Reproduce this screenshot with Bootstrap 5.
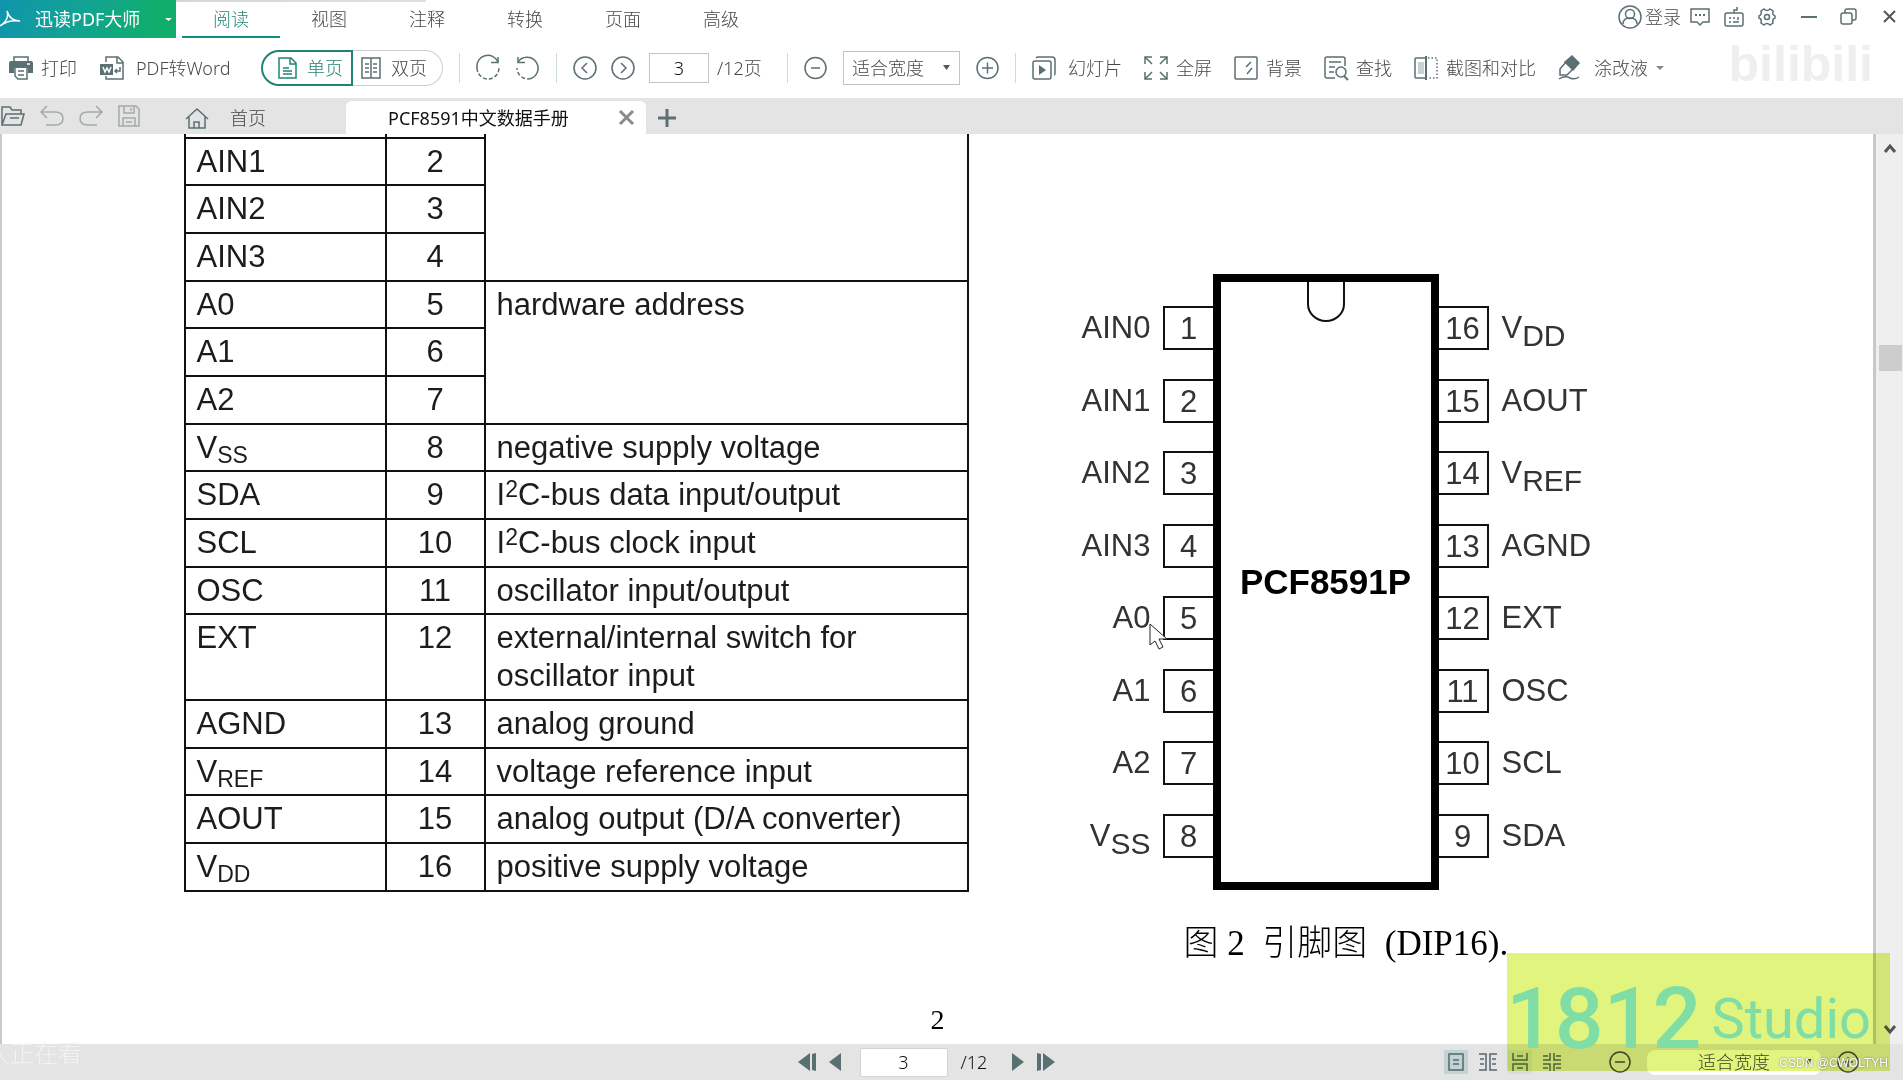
<!DOCTYPE html>
<html lang="zh-CN">
<head>
<meta charset="utf-8">
<meta name="viewport" content="width=device-width, initial-scale=1">
<title>PCF8591中文数据手册 - 迅读PDF大师</title>
<link rel="stylesheet" href="https://cdn.jsdelivr.net/npm/bootstrap@5.3.0/dist/css/bootstrap.min.css">
<script src="https://cdn.jsdelivr.net/npm/bootstrap@5.3.0/dist/js/bootstrap.bundle.min.js"></script>
<style>
  :root { --ink: #484848; --icon: #5b7072; --teal: #1f8474; --strip: #e4e4e4; }
  body { font-family: "Noto Sans", "Noto Sans CJK SC", sans-serif; font-size: 18px; line-height: 24px; font-weight: 300; color: var(--ink); background: #fff; overflow: hidden; }
  svg { display: block; flex: none; fill: none; stroke: currentColor; stroke-width: 1.5; overflow: visible; }
  button { background: none; border: 0; padding: 0; color: inherit; font: inherit; white-space: nowrap; }
  .ic { color: var(--icon); }

  /* title bar */
  .titlebar { height: 38px; }
  .brand { width: 176px; height: 38px; color: #fff; background: linear-gradient(110deg, #1094ac 0%, #12a394 45%, #10ad6c 85%); }
  .brand-name { margin-left: 14px; width: 110px; text-align: left; font-weight: 400; }
  .top-edge { left: 176px; width: 250px; height: 2px; background: linear-gradient(90deg, #d6d6d6, #e0e0e0); }
  .menu { padding-left: 6px; }
  .menu-tab { width: 98px; height: 38px; padding-top: 2px; border-bottom: 2px solid transparent; }
  .menu-tab.active { color: var(--teal); border-bottom-color: #12907f; }
  .window-tools { height: 33px; gap: 14px; padding-right: 7px; }
  .login { gap: 3px; margin-right: -5px; }
  .login span { color: var(--ink); }
  .wm-bili { right: 30px; top: 34px; font: 700 50px/60px "Liberation Sans", sans-serif; color: #f0eef1; }

  /* tool bar */
  .toolbar { height: 60px; padding-left: 9px; }
  .tools { gap: 23px; }
  .navs { gap: 16px; margin: 0 16px; }
  .tool { display: flex; align-items: center; gap: 8px; }
  .tool-wide { gap: 12px; }
  .tool-word { width: 138px; }
  .rule { width: 1px; height: 30px; background: #cfdcdc; }
  .pagemode { height: 36px; }
  .pagemode button { height: 36px; display: flex; align-items: center; gap: 10px; border: 1px solid #cfcfcf; }
  .pagemode .mode-one { width: 92px; padding-left: 15px; border: 2px solid var(--teal); border-radius: 18px 0 0 18px; color: var(--teal); }
  .pagemode .mode-two { width: 90px; padding-left: 8px; border-left: 0; border-radius: 0 18px 18px 0; }
  .page-input { width: 60px; height: 30px; border: 1px solid #c4c4c4; color: #111; text-align: center; font-size: 18px; font-weight: 300; padding: 0; }
  .page-label { width: 122px; color: var(--ink); }
  .paging { gap: 14px; }
  .zoom-select { width: 117px; height: 34px; border: 1px solid #c4c4c4; border-radius: 0; padding: 0 0 0 8px; appearance: none; color: var(--ink); font-size: 18px; font-weight: 300;
    background: #fff url("data:image/svg+xml,%3Csvg xmlns='http://www.w3.org/2000/svg' width='8' height='6'%3E%3Cpath d='M0 0h7L3.500 5z' fill='%23555'/%3E%3C/svg%3E") no-repeat right 8px center; }
  .tools-right { gap: 22px; }

  /* document tabs */
  .doctabs { height: 36px; background: var(--strip); }
  .quick { gap: 15px; width: 186px; padding-left: 1px; color: #a3a9a9; }
  .tab-home { width: 160px; gap: 22px; color: #444; }
  .tab-doc { width: 300px; height: 33px; background: #fff; border-radius: 6px 6px 0 0; padding: 0 12px 0 42px; color: #111; font-weight: 400; }

  /* document */
  .viewer { min-height: 0; }
  .pageview { border-left: 2px solid #c9c9c9; border-right: 3px solid #c8c8c8; overflow: hidden; background: #fff; }
  .sheet { width: 1508px; color: #1c1c1c; font: 400 31px/38px "Liberation Sans", sans-serif; }
  .pins { width: 785px; border-collapse: collapse; }
  .pins td { border: 2px solid #111; padding: 4px 11px 0; vertical-align: top; }
  .pins tr { height: 48px; }
  .pins tr:nth-child(3n+2) { height: 47px; }
  .pins tr.cut { height: 4px; }
  .pins tr.cut td { border-top: 0; padding: 0; }
  .pins tr.tall { height: 86px; }
  .pins td:nth-child(2) { text-align: center; padding-left: 0; padding-right: 0; }
  .pins sub, .pins sup { font-size: 23px; line-height: 0; vertical-align: -5px; position: static; }
  .pins sup { vertical-align: 8px; }
  .c-sym { width: 201px; } .c-pin { width: 99px; }
  .figure-chip { margin: 140px 0 0 91px; color: #333; }
  .legs { height: 552px; margin-top: 32px; }
  .leg { height: 44px; }
  .leg b { width: 50px; height: 44px; border: 2px solid #111; font-weight: 400; line-height: 41px; text-align: center; }
  .legs-l { width: 153px; } .legs-l .leg { justify-content: flex-end; gap: 12px; } .legs-l b { border-right: 0; }
  .legs-r .leg { gap: 13px; } .legs-r b { border-left: 0; }
  .leg sub { font-size: 30px; line-height: 0; vertical-align: -8px; position: static; }
  .chip { width: 226px; height: 616px; border: 8px solid #000; color: #000; font-size: 35px; font-weight: 700; }
  .chip svg { top: 0; left: 50%; margin-left: -19px; }
  .caption-cn { font: 300 35px/44px "Liberation Serif", "Noto Sans CJK SC", serif; color: #000; white-space: pre; margin: 32px 0 0 124px; }
  .cursor { left: 100%; top: 24px; margin-left: -2px; z-index: 2; }
  .folio { font: 400 28px/32px "Liberation Serif", serif; color: #000; }
  .scroller { width: 27px; background: #efefef; color: #555; padding: 10px 0; }
  .thumb { width: 23px; height: 26px; background: #cdcdcd; top: 211px; right: 1px; }

  /* status bar */
  .status { height: 36px; background: var(--strip); padding-right: 44px; }
  .status > div { flex: 1 1 0; }
  .status > .pager { flex: none; gap: 13px; padding-right: 7px; }
  .pager svg { fill: #587072; stroke: none; }
  .pager .page-input { width: 88px; height: 29px; border: 1px solid #d4d4d4; border-radius: 2px; margin: 0 0 0 6px; }
  .pager .of { width: 38px; color: #111; }
  .views { gap: 8px; }
  .view { width: 24px; height: 24px; display: flex; align-items: center; justify-content: center; color: #56666c; }
  .view.on { background: #c3d2d2; }
  .view.soft { background: #d5dcdc; }
  .zoomer { gap: 16px; margin-left: 45px; }
  .zoomer .zoom-select { width: 174px; height: 25px; border: 0; border-radius: 8px; text-align: center; padding: 0; }
  .wm-watch { left: -14px; bottom: 13px; color: #f1f3f3; font-size: 24px; line-height: 28px; }
  .studio { right: 13px; bottom: 9px; width: 383px; height: 118px; background: #e0f47e; mix-blend-mode: multiply; pointer-events: none; }
  .studio-name { right: 32px; bottom: 30px; color: #7fdda5; font-family: Roboto, sans-serif; pointer-events: none; gap: 10px; }
  .studio-name .big { font-size: 86px; line-height: 62px; font-weight: 500; } .studio-name .sml { font-size: 56px; line-height: 62px; font-weight: 400; }
  .wm-csdn { right: 15px; bottom: 8px; font: 400 12px/18px "Liberation Sans", sans-serif; color: #fff; text-shadow: 0 0 2px #666; }
</style>
</head>
<body>
<div class="d-flex flex-column vh-100 position-relative">

  <header class="titlebar d-flex align-items-start position-relative">
    <div class="top-edge position-absolute top-0"></div>
    <button class="brand d-flex align-items-center" type="button">
      <svg width="21" height="20" viewBox="0 0 21 20" stroke-width="2.500"><path d="M0 17 C6 13 9 8 7 2 C9 9 14 12 20 12 C13 11 6 12 0 17"/></svg>
      <span class="brand-name">迅读PDF大师</span>
      <svg class="ms-auto me-1" width="7" height="5" viewBox="0 0 7 5"><path d="M0 1h7L3.500 4z" fill="#fff" stroke="none"/></svg>
    </button>
    <nav class="menu d-flex">
      <button class="menu-tab active" type="button">阅读</button>
      <button class="menu-tab" type="button">视图</button>
      <button class="menu-tab" type="button">注释</button>
      <button class="menu-tab" type="button">转换</button>
      <button class="menu-tab" type="button">页面</button>
      <button class="menu-tab" type="button">高级</button>
    </nav>
    <div class="window-tools d-flex align-items-center ms-auto ic">
      <button class="login d-flex align-items-center" type="button">
        <svg width="24" height="24" viewBox="0 0 24 24"><circle cx="12" cy="12" r="11"/><circle cx="12" cy="9" r="4.500"/><path d="M5 19c0-4 3-6 7-6s7 2 7 6"/></svg>
        <span>登录</span></button>
      <button type="button" aria-label="消息"><svg width="20" height="20" viewBox="0 0 20 20"><path d="M1 2h18v13h-6l-3 3-3-3H1z"/><path d="M5 8h2m2 0h2m2 0h2" stroke-width="2"/></svg></button>
      <button type="button" aria-label="键盘"><svg width="20" height="20" viewBox="0 0 20 20"><rect x="1" y="6" width="18" height="13" rx="2"/><path d="M10 6V3h3V0M5 11h2m2 0h2m3-1v3m-9 2h2m2 0h6"/></svg></button>
      <button type="button" aria-label="设置"><svg width="18" height="18" viewBox="0 0 18 18"><path d="M6 1q3 3 6 0l3 2q-1 4 2 5v2q-3 1-2 5l-3 2q-3-3-6 0l-3-2q1-4-2-5V8q3-1 2-5z"/><circle cx="9" cy="9" r="2.500"/></svg></button>
      <button class="ms-2" type="button" aria-label="最小化"><svg width="24" height="18" viewBox="0 0 24 18"><path d="M3 9h16" stroke-width="2"/></svg></button>
      <button class="px-1" type="button" aria-label="还原"><svg width="17" height="17" viewBox="0 0 17 17"><rect x="1" y="5" width="11" height="11" rx="2"/><path d="M5 5V3q0-2 2-2h7q2 0 2 2v7q0 2-2 2h-2"/></svg></button>
      <button class="ps-2" type="button" aria-label="关闭"><svg width="13" height="13" viewBox="0 0 13 13"><path d="M1 1l11 11M12 1 1 12" stroke="#555" stroke-width="2"/></svg></button>
    </div>
    <div class="wm-bili position-absolute">bilibili</div>
  </header>

  <div class="toolbar d-flex align-items-center position-relative">
    <div class="tools d-flex align-items-center">
      <button class="tool" type="button"><svg class="ic" width="24" height="24" viewBox="0 0 24 24"><path d="M5 5V1h14v4"/><path d="M0 7q0-2 2-2h20q2 0 2 2v10h-5v-5H5v5H0z" fill="currentColor" stroke="none"/><path d="M6 12v8l3 3h9V12M9 15h6m-6 4h6"/><path d="M18 8h3" stroke="#fff"/></svg>打印</button>
      <button class="tool tool-wide tool-word" type="button"><svg class="ic" width="24" height="24" viewBox="0 0 24 24"><path d="M6 6V1h12l5 5v17H6v-3M17 1v6h6"/><rect y="8" width="13" height="11" fill="currentColor" stroke="none"/><path d="M3 11l2 5 2-4 2 4 2-5" stroke="#fff"/><path d="M20 11v4h-5m2-2-2 2 2 2"/></svg>PDF转Word</button>
      <div class="pagemode d-flex">
        <button class="mode-one" type="button"><svg width="19" height="22" viewBox="0 0 19 22"><path d="M1 1h12l5 5v15H1zM12 1v6h6M5 11h6m-6 3h9m-9 3h9"/></svg>单页</button>
        <button class="mode-two" type="button"><svg class="ic" width="20" height="22" viewBox="0 0 20 22"><path d="M1 1h18v20H1zM10 1v20M4 7h4M4 11h4M4 15h4M12 7h4m-4 4h4m-4 4h4"/></svg>双页</button>
      </div>
    </div>
    <div class="navs d-flex align-items-center ic">
      <span class="rule"></span>
      <button type="button" aria-label="顺时针"><svg width="24" height="24" viewBox="0 0 24 24"><path d="M22 6A11 11 0 0 0 1 12"/><path d="M1 12A11 11 0 0 0 23 12" stroke-dasharray="4 2"/><path d="M22 1v5.500h-7"/></svg></button>
      <button type="button" aria-label="逆时针"><svg width="24" height="24" viewBox="0 0 24 24"><path d="M2 6A11 11 0 1 1 15 22.500"/><path d="M15 22.500A11 11 0 0 1 1 12" stroke-dasharray="4 2"/><path d="M2 1v5.500h7"/></svg></button>
      <span class="rule"></span>
      <div class="paging d-flex align-items-center">
        <button type="button" aria-label="上一页"><svg width="24" height="24" viewBox="0 0 24 24"><circle cx="12" cy="12" r="11"/><path d="M14 7l-5 5 5 5"/></svg></button>
        <button type="button" aria-label="下一页"><svg width="24" height="24" viewBox="0 0 24 24"><circle cx="12" cy="12" r="11"/><path d="M10 7l5 5-5 5"/></svg></button>
        <label class="page-label d-flex align-items-center gap-2"><input class="page-input" type="text" value="3">/12页</label>
      </div>
      <span class="rule"></span>
      <button type="button" aria-label="缩小"><svg width="23" height="24" viewBox="0 0 23 24"><circle cx="11.500" cy="12" r="10.500"/><path d="M7 12h9"/></svg></button>
      <select class="zoom-select" aria-label="缩放"><option>适合宽度</option></select>
      <button type="button" aria-label="放大"><svg width="23" height="24" viewBox="0 0 23 24"><circle cx="11.500" cy="12" r="10.500"/><path d="M6 12h11M11.500 6.500v11"/></svg></button>
      <span class="rule"></span>
    </div>
    <div class="tools-right d-flex align-items-center">
      <button class="tool tool-wide" type="button"><svg class="ic" width="24" height="24" viewBox="0 0 24 24" stroke-width="2"><rect x="1" y="5" width="18" height="18" rx="2"/><path d="M4 2q1-1 2-1h14q3 0 3 3v13q0 2-1 2"/><path d="M7 9l7 5-7 5z" fill="currentColor" stroke="none"/></svg>幻灯片</button>
      <button class="tool" type="button"><svg class="ic" width="24" height="24" viewBox="0 0 24 24"><path d="M1 8V1h7M1 1l7 7M16 1h7v7M23 1l-7 7M1 16v7h7M1 23l7-7M23 16v7h-7M23 23l-7-7"/></svg>全屏</button>
      <button class="tool" type="button"><svg class="ic" width="24" height="24" viewBox="0 0 24 24"><rect x="1" y="1" width="22" height="22" rx="1"/><path d="M12 11l5-5M13 18l5-6"/></svg>背景</button>
      <button class="tool" type="button"><svg class="ic" width="24" height="24" viewBox="0 0 24 24"><path d="M11 22H3q-2 0-2-2V3q0-2 2-2h16q2 0 2 2v7M5 6h12M5 11h6M5 16h5"/><circle cx="17" cy="16" r="5"/><path d="M20 20l4 4" stroke-width="2"/></svg>查找</button>
      <button class="tool" type="button"><svg class="ic" width="24" height="24" viewBox="0 0 24 24"><path d="M12 2H2q-1 0-1 1v18q0 1 1 1h10"/><rect x="4" y="6" width="6" height="12" fill="#c9d2d2" stroke="none"/><path d="M12 0v24" stroke-width="2"/><path d="M14 2h9v20h-9" stroke-dasharray="1.500 2"/></svg>截图和对比</button>
      <button class="tool tool-wide" type="button"><svg class="ic" width="24" height="24" viewBox="0 0 24 24"><path d="M14 0l7 7-6 7-8-8z" fill="currentColor"/><path d="M8 6l-6 7v6h7l6-6M1 23q6-4 11-1 5 2 9-1"/></svg>涂改液
        <svg width="8" height="5" viewBox="0 0 8 5"><path d="M-4 0h8L0 4z" fill="#888" stroke="none"/></svg></button>
    </div>
  </div>

  <div class="doctabs d-flex align-items-end">
    <div class="quick d-flex align-items-center h-100">
      <button class="ic" type="button" aria-label="打开"><svg width="24" height="20" viewBox="0 0 24 20"><path d="M1 19V1h8l2 3h9v4M1 19 5 8h18l-3 11zM9 12h9"/></svg></button>
      <button type="button" aria-label="撤销"><svg width="24" height="20" viewBox="0 0 24 20"><path d="M7 0 1 6l6 6M1 6h14q8 0 8 6.500T15 19H6"/></svg></button>
      <button type="button" aria-label="重做"><svg width="24" height="20" viewBox="0 0 24 20"><path d="M17 0l6 6-6 6M23 6H9q-8 0-8 6.500T9 19h9"/></svg></button>
      <button type="button" aria-label="保存"><svg width="22" height="22" viewBox="0 0 22 22"><path d="M1 1h17l3 3v17H1zM6 1v7h10V1M13 3v3M5 21v-8h12v8M8 17h6"/></svg></button>
    </div>
    <button class="tab-home d-flex align-items-center h-100 pt-1" type="button"><svg class="ic" width="22" height="22" viewBox="0 0 22 22"><path d="M0 12 11 2l11 10M3 10v11h16V10M8 21v-6h5v6"/></svg>首页</button>
    <div class="tab-doc d-flex align-items-center justify-content-between">PCF8591中文数据手册
      <button type="button" aria-label="关闭标签"><svg width="15" height="15" viewBox="0 0 15 15"><path d="M1 1l13 13M14 1 1 14" stroke="#8a8a8a" stroke-width="3"/></svg></button></div>
    <button class="h-100 ps-2 pt-1 ms-1 ic" type="button" aria-label="新建标签"><svg width="18" height="18" viewBox="0 0 18 18"><path d="M9 0v18M0 9h18" stroke-width="3"/></svg></button>
  </div>

  <main class="viewer d-flex flex-grow-1">
    <div class="pageview flex-grow-1 d-flex flex-column">
      <div class="sheet mx-auto d-flex align-items-start">
        <table class="pins flex-shrink-0">
          <tbody>
            <tr class="cut"><td class="c-sym"></td><td class="c-pin"></td><td rowspan="4"></td></tr>
            <tr><td>AIN1</td><td>2</td></tr>
            <tr><td>AIN2</td><td>3</td></tr>
            <tr><td>AIN3</td><td>4</td></tr>
            <tr><td>A0</td><td>5</td><td rowspan="3">hardware address</td></tr>
            <tr><td>A1</td><td>6</td></tr>
            <tr><td>A2</td><td>7</td></tr>
            <tr><td>V<sub>SS</sub></td><td>8</td><td>negative supply voltage</td></tr>
            <tr><td>SDA</td><td>9</td><td>I<sup>2</sup>C-bus data input/output</td></tr>
            <tr><td>SCL</td><td>10</td><td>I<sup>2</sup>C-bus clock input</td></tr>
            <tr><td>OSC</td><td>11</td><td>oscillator input/output</td></tr>
            <tr class="tall"><td>EXT</td><td>12</td><td>external/internal switch for<br>oscillator input</td></tr>
            <tr><td>AGND</td><td>13</td><td>analog ground</td></tr>
            <tr><td>V<sub>REF</sub></td><td>14</td><td>voltage reference input</td></tr>
            <tr><td>AOUT</td><td>15</td><td>analog output (D/A converter)</td></tr>
            <tr><td>V<sub>DD</sub></td><td>16</td><td>positive supply voltage</td></tr>
          </tbody>
        </table>
        <figure class="figure-chip mb-0 flex-shrink-0">
          <div class="d-flex align-items-start">
            <div class="legs legs-l d-flex flex-column justify-content-between">
              <div class="leg d-flex align-items-center"><span>AIN0</span><b>1</b></div>
              <div class="leg d-flex align-items-center"><span>AIN1</span><b>2</b></div>
              <div class="leg d-flex align-items-center"><span>AIN2</span><b>3</b></div>
              <div class="leg d-flex align-items-center"><span>AIN3</span><b>4</b></div>
              <div class="leg d-flex align-items-center"><span class="position-relative">A0<svg class="cursor position-absolute" width="20" height="27" viewBox="0 0 20 27"><path d="M1 1v21l5-4 4 8 4-2-4-8h8z" fill="#fff" stroke="#222" stroke-width="1"/></svg></span><b>5</b></div>
              <div class="leg d-flex align-items-center"><span>A1</span><b>6</b></div>
              <div class="leg d-flex align-items-center"><span>A2</span><b>7</b></div>
              <div class="leg d-flex align-items-center"><span>V<sub>SS</sub></span><b>8</b></div>
            </div>
            <div class="chip position-relative d-flex align-items-center justify-content-center">
              <svg class="position-absolute" width="38" height="40" viewBox="0 0 38 40"><path d="M1 0v22a18 17 0 0 0 36 0V0" stroke="#111" stroke-width="2"/></svg>
              PCF8591P
            </div>
            <div class="legs legs-r d-flex flex-column justify-content-between">
              <div class="leg d-flex align-items-center"><b>16</b><span>V<sub>DD</sub></span></div>
              <div class="leg d-flex align-items-center"><b>15</b><span>AOUT</span></div>
              <div class="leg d-flex align-items-center"><b>14</b><span>V<sub>REF</sub></span></div>
              <div class="leg d-flex align-items-center"><b>13</b><span>AGND</span></div>
              <div class="leg d-flex align-items-center"><b>12</b><span>EXT</span></div>
              <div class="leg d-flex align-items-center"><b>11</b><span>OSC</span></div>
              <div class="leg d-flex align-items-center"><b>10</b><span>SCL</span></div>
              <div class="leg d-flex align-items-center"><b>9</b><span>SDA</span></div>
            </div>
          </div>
          <figcaption class="caption-cn">图 2  引脚图  (DIP16).</figcaption>
        </figure>
      </div>
      <div class="folio mt-auto pb-2 text-center">2</div>
    </div>
    <div class="scroller position-relative d-flex flex-column align-items-center justify-content-between">
      <svg width="12" height="9" viewBox="0 0 12 9"><path d="M1 8l5-6 5 6" stroke-width="3"/></svg>
      <div class="thumb position-absolute"></div>
      <svg width="12" height="9" viewBox="0 0 12 9"><path d="M1 1l5 6 5-6" stroke-width="3"/></svg>
    </div>
  </main>

  <footer class="status d-flex align-items-center">
    <div></div>
    <div class="pager d-flex align-items-center">
      <button type="button" aria-label="首页"><svg width="18" height="18" viewBox="0 0 18 18"><path d="M12 0v18L0 9zM14 1l4-1v18l-4-1z"/></svg></button>
      <button type="button" aria-label="上一页"><svg width="12" height="18" viewBox="0 0 12 18"><path d="M12 0v18L0 9z"/></svg></button>
      <input class="page-input" type="text" value="3" aria-label="页码">
      <span class="of">/12</span>
      <button type="button" aria-label="下一页"><svg width="12" height="18" viewBox="0 0 12 18"><path d="M0 0v18l12-9z"/></svg></button>
      <button type="button" aria-label="末页"><svg width="18" height="18" viewBox="0 0 18 18"><path d="M6 0v18l12-9zM0 0l4 1v16l-4 1z"/></svg></button>
    </div>
    <div class="d-flex align-items-center justify-content-end">
      <div class="views d-flex">
        <button class="view on" type="button" aria-label="单页视图"><svg width="16" height="18" viewBox="0 0 16 18"><path d="M1 1h14v16H1zM5 7h6m-6 4h6"/></svg></button>
        <button class="view" type="button" aria-label="双页视图"><svg width="18" height="18" viewBox="0 0 18 18"><path d="M0 1h7v16H0M1 6h4m-4 5h4M18 1h-7v16h7M13 6h4m-4 5h4"/></svg></button>
        <button class="view soft" type="button" aria-label="连续视图"><svg width="16" height="18" viewBox="0 0 16 18"><path d="M1 0v7h14V0M1 18v-7h14v7M5 3h6m-6 12h6"/></svg></button>
        <button class="view" type="button" aria-label="双页连续"><svg width="18" height="18" viewBox="0 0 18 18"><path d="M0 7h7V0M18 7h-7V0M0 11h7v7M18 11h-7v7M0 3h5M13 3h5M0 15h5m8 0h5"/></svg></button>
      </div>
      <div class="zoomer d-flex align-items-center">
        <button type="button" aria-label="缩小"><svg width="22" height="22" viewBox="0 0 22 22"><circle cx="11" cy="11" r="10"/><path d="M6 11h10"/></svg></button>
        <select class="zoom-select" aria-label="缩放比例"><option>适合宽度</option></select>
        <button type="button" aria-label="放大"><svg width="22" height="22" viewBox="0 0 22 22"><circle cx="11" cy="11" r="10"/><path d="M6 11h10M11 6v10"/></svg></button>
      </div>
    </div>
  </footer>

  <div class="wm-watch position-absolute">人正在看</div>
  <div class="studio position-absolute"></div>
  <div class="studio-name position-absolute d-flex align-items-end"><span class="big">1812</span><span class="sml">Studio</span></div>
  <div class="wm-csdn position-absolute">CSDN @CWOLTYH</div>
</div>
</body>
</html>
